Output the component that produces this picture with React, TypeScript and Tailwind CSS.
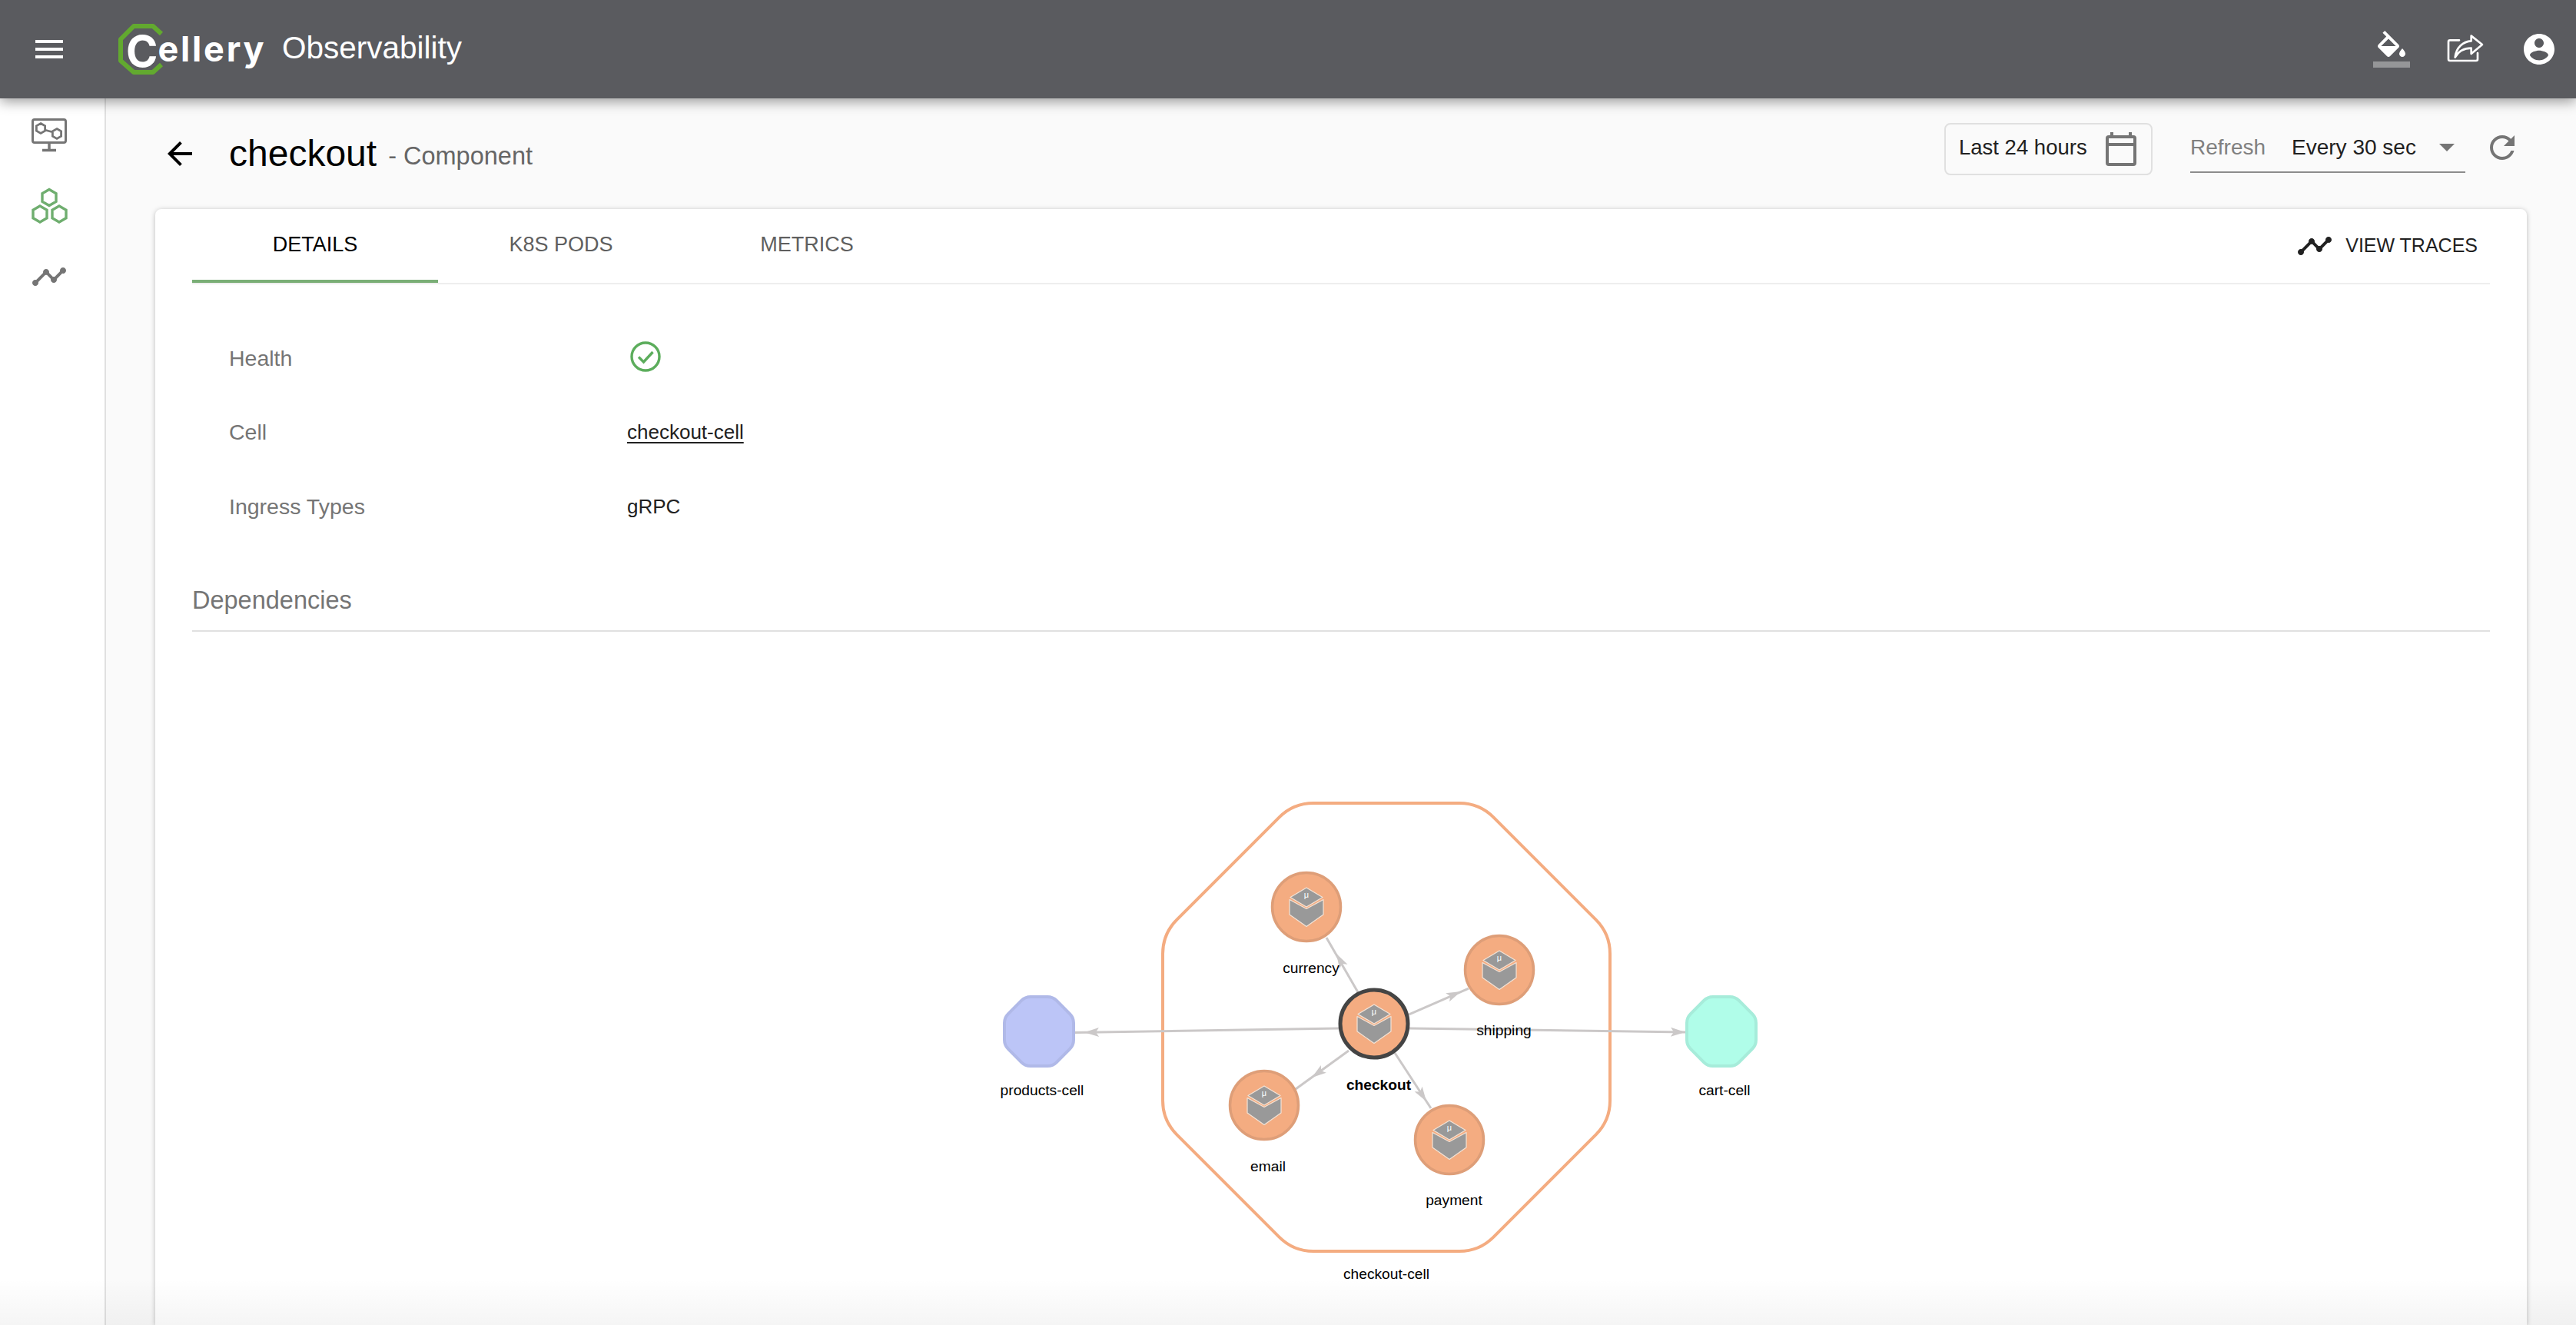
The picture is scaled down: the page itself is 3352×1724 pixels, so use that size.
import React from "react";

type Pt = [number, number];

const roundedPoly = (pts: Pt[], r: number) => {
  let d = "";
  pts.forEach((p, i) => {
    const prev = pts[(i + pts.length - 1) % pts.length];
    const next = pts[(i + 1) % pts.length];
    const toward = (a: Pt, b: Pt): Pt => {
      const len = Math.hypot(b[0] - a[0], b[1] - a[1]);
      return [a[0] + ((b[0] - a[0]) / len) * r, a[1] + ((b[1] - a[1]) / len) * r];
    };
    const a = toward(p, prev);
    const b = toward(p, next);
    d += `${i === 0 ? "M" : "L"}${a[0]} ${a[1]}Q${p[0]} ${p[1]} ${b[0]} ${b[1]}`;
  });
  return d + "Z";
};

const octagon = (cx: number, cy: number, half: number, cut: number): Pt[] => [
  [cx - half + cut, cy - half],
  [cx + half - cut, cy - half],
  [cx + half, cy - half + cut],
  [cx + half, cy + half - cut],
  [cx + half - cut, cy + half],
  [cx - half + cut, cy + half],
  [cx - half, cy + half - cut],
  [cx - half, cy - half + cut],
];

const edges: { from: Pt; to: Pt; tip: Pt }[] = [
  { from: [1742, 1340], to: [1399, 1345.5], tip: [1411, 1345.3] },
  { from: [1834, 1340], to: [2193, 1345], tip: [2193, 1345] },
  { from: [1767, 1293], to: [1726, 1222], tip: [1739, 1243] },
  { from: [1833, 1322], to: [1911, 1288], tip: [1901, 1292] },
  { from: [1755, 1369], to: [1686, 1419], tip: [1707, 1404] },
  { from: [1815, 1372], to: [1862, 1444], tip: [1856, 1435] },
];

const nodes = [
  { x: 1700, y: 1182, label: "currency", lx: 1706, ly: 1262 },
  { x: 1951, y: 1264, label: "shipping", lx: 1957, ly: 1343 },
  { x: 1645, y: 1440, label: "email", lx: 1650, ly: 1520 },
  { x: 1886, y: 1485, label: "payment", lx: 1892, ly: 1564 },
];

const arrowHead = (from: Pt, tip: Pt) => {
  const a = Math.atan2(tip[1] - from[1], tip[0] - from[0]);
  const pt = (along: number, side: number) =>
    `${tip[0] - Math.cos(a) * along - Math.sin(a) * side},${tip[1] - Math.sin(a) * along + Math.cos(a) * side}`;
  return [pt(0, 0), pt(19, 6), pt(15, 0), pt(19, -6)].join(" ");
};

const Cube = ({ x, y }: { x: number; y: number }) => (
  <g transform={`translate(${x} ${y})`} fill="#999999" stroke="#f3e3d6" strokeWidth="1.2" strokeLinejoin="round">
    <path d="M0 -25L21 -12.5L0 0L-21 -12.5Z" />
    <path d="M-22 -9.5L0 2.5L22 -9.5V10L0 25.5L-22 10Z" />
    <text x="0" y="-12" textAnchor="middle" fontSize="11" fill="#ffffff" stroke="none" fontFamily="Liberation Sans, sans-serif">
      μ
    </text>
  </g>
);

const ServiceNode = ({ x, y, active }: { x: number; y: number; active?: boolean }) => (
  <g>
    <circle
      cx={x}
      cy={y}
      r={active ? 44 : 44.5}
      fill="#f4ac81"
      stroke={active ? "#444444" : "#de9e78"}
      strokeWidth={active ? 5 : 3.5}
    />
    <Cube x={x} y={y} />
  </g>
);

const DependencyGraph = () => (
  <svg viewBox="250 824 2990 900" className="block w-[2990px] h-[900px]" fontFamily="Liberation Sans, Arial, sans-serif">
    <path
      d={roundedPoly(
        [
          [1683, 1047],
          [1925, 1047],
          [2095, 1217],
          [2095, 1460],
          [1925, 1630],
          [1683, 1630],
          [1513, 1460],
          [1513, 1217],
        ],
        26,
      )}
      fill="none"
      stroke="#f4ac81"
      strokeWidth="4"
    />
    {edges.map((e, i) => (
      <g key={i}>
        <line x1={e.from[0]} y1={e.from[1]} x2={e.to[0]} y2={e.to[1]} stroke="#cbc8c8" strokeWidth="3" />
        <polygon points={arrowHead(e.from, e.tip)} fill="#cbc8c8" />
      </g>
    ))}
    <path d={roundedPoly(octagon(1352, 1344, 45, 27), 7)} fill="#bcc5f7" stroke="#b0b9e8" strokeWidth="4" />
    <path d={roundedPoly(octagon(2240, 1344, 45, 27), 7)} fill="#b0fde9" stroke="#a6ecda" strokeWidth="4" />
    {nodes.map((n) => (
      <ServiceNode key={n.label} x={n.x} y={n.y} />
    ))}
    <ServiceNode x={1788} y={1334} active />
    <g fontSize="19.2" fill="#000000" textAnchor="middle">
      {nodes.map((n) => (
        <text key={n.label} x={n.lx} y={n.ly + 6}>
          {n.label}
        </text>
      ))}
      <text x={1794} y={1420} fontWeight="700">
        checkout
      </text>
      <text x={1356} y={1427}>
        products-cell
      </text>
      <text x={2244} y={1427}>
        cart-cell
      </text>
      <text x={1804} y={1666}>
        checkout-cell
      </text>
    </g>
  </svg>
);

const TimelineIcon = ({ className }: { className: string }) => (
  <svg viewBox="0 0 24 24" className={className} fill="currentColor">
    <path d="M23 8c0 1.1-.9 2-2 2-.18 0-.35-.02-.51-.07l-3.56 3.55c.05.16.07.34.07.52 0 1.1-.9 2-2 2s-2-.9-2-2c0-.18.02-.36.07-.52l-2.55-2.55c-.16.05-.34.07-.52.07s-.36-.02-.52-.07l-4.55 4.56c.05.16.07.33.07.51 0 1.1-.9 2-2 2s-2-.9-2-2 .9-2 2-2c.18 0 .35.02.51.07l4.56-4.55C8.02 9.36 8 9.18 8 9c0-1.1.9-2 2-2s2 .9 2 2c0 .18-.02.36-.07.52l2.55 2.55c.16-.05.34-.07.52-.07s.36.02.52.07l3.55-3.56C19.02 8.35 19 8.18 19 8c0-1.1.9-2 2-2s2 .9 2 2z" />
  </svg>
);

const Logo = () => (
  <div className="relative w-[200px] h-[72px] flex items-baseline pl-[11px] text-white font-['Inter',sans-serif] font-bold leading-none">
    <span className="relative top-[7px] text-[56px] leading-[64px] tracking-[-1px]">C</span>
    <span className="ml-[1px] text-[45px] leading-[64px] tracking-[2.8px]">ellery</span>
    <svg viewBox="153 30 60 72" className="absolute left-0 top-0 w-[60px] h-[72px]" fill="none">
      <path d="M210 46L199 36H174L157 53V81L174 96H199L210 86" stroke="#62a92f" strokeWidth="6" strokeLinejoin="round" />
    </svg>
  </div>
);

const Header = () => (
  <header className="relative z-10 h-[128px] shrink-0 flex items-center pl-10 pr-6 bg-[#5a5b5f] text-white shadow-[0_4px_16px_rgba(0,0,0,0.4)]">
    <svg viewBox="0 0 24 24" className="w-12 h-12" fill="currentColor">
      <path d="M3 18h18v-2H3v2zm0-5h18v-2H3v2zm0-7v2h18V6H3z" />
    </svg>
    <div className="ml-[65px]">
      <Logo />
    </div>
    <span className="ml-[14px] -mt-[3px] text-[40.500px] leading-none">Observability</span>
    <div className="ml-auto flex items-center gap-12">
      <svg viewBox="0 0 24 24" className="w-12 h-12" fill="currentColor">
        <path d="M16.56 8.94L7.62 0 6.21 1.41l2.38 2.38-5.15 5.15c-.59.59-.59 1.54 0 2.12l5.5 5.5c.29.29.68.44 1.06.44s.77-.15 1.06-.44l5.5-5.5c.59-.58.59-1.53 0-2.12zM5.21 10L10 5.21 14.79 10H5.21zM19 11.5s-2 2.17-2 3.5c0 1.1.9 2 2 2s2-.9 2-2c0-1.33-2-3.5-2-3.5z" />
        <path fillOpacity=".36" d="M0 20h24v4H0z" />
      </svg>
      <svg viewBox="0 -12 144 144" className="w-12 h-12" fill="none" stroke="currentColor" strokeWidth="8" strokeLinejoin="round" strokeLinecap="round">
        <path d="M48 25H12Q6 25 6 31V99Q6 105 12 105H114Q120 105 120 99V75" />
        <path d="M32 92C36 52 64 30 95 28V8L138 42L95 78V56C70 56 46 66 32 92Z" />
      </svg>
      <svg viewBox="0 0 24 24" className="w-12 h-12" fill="currentColor">
        <path d="M12 2C6.48 2 2 6.48 2 12s4.48 10 10 10 10-4.48 10-10S17.52 2 12 2zm0 3c1.66 0 3 1.34 3 3s-1.34 3-3 3-3-1.34-3-3 1.34-3 3-3zm0 14.2c-2.5 0-4.71-1.28-6-3.22.03-1.99 4-3.08 6-3.08 1.99 0 5.97 1.09 6 3.08-1.29 1.94-3.5 3.22-6 3.22z" />
      </svg>
    </div>
  </header>
);

const Sidebar = () => (
  <aside className="w-[138px] shrink-0 bg-white border-r-2 border-[#e0e0e0] flex flex-col items-center pr-[8px]">
    <svg viewBox="0 0 48 48" className="mt-[23px] w-12 h-12 text-[#757575]" fill="none" stroke="currentColor">
      <rect x="2.500" y="4.500" width="43" height="30" rx="2.500" strokeWidth="3" />
      <path d="M24 36v7M15 44.500h18" strokeWidth="3.500" />
      <path d="M13 9.500l5.600 3.200v6.500l-5.600 3.200-5.600-3.200v-6.500zM34 16.500l5.600 3.200v6.500l-5.600 3.200-5.600-3.200v-6.500zM18 18l11 3" strokeWidth="2.800" />
    </svg>
    <svg viewBox="0 0 48 48" className="mt-[45px] w-12 h-12 text-[#6fae6f]" fill="none" stroke="currentColor" strokeWidth="3.400">
      <path d="M24 2.500l9 5.200v10.600l-9 5.200-9-5.200V7.700zM12 24l9 5.200v10.600l-9 5.200-9-5.200V29.200zM37 24l9 5.200v10.600l-9 5.200-9-5.200V29.200z" />
    </svg>
    <TimelineIcon className="mt-[44px] w-12 h-12 text-[#757575]" />
  </aside>
);

const Toolbar = () => (
  <div className="h-[144px] shrink-0 flex items-center pl-[72px] pr-[72px]">
    <svg viewBox="0 0 24 24" className="w-12 h-12 text-black" fill="currentColor">
      <path d="M20 11H7.83l5.59-5.59L12 4l-8 8 8 8 1.41-1.41L7.83 13H20v-2z" />
    </svg>
    <h1 className="ml-[40px] text-[48px] leading-none text-black">checkout</h1>
    <span className="ml-[15px] mt-[6px] text-[32.500px] leading-none text-[#666666]">- Component</span>
    <div className="ml-auto flex items-center">
      <div className="w-[271px] h-[68px] flex items-center justify-between pl-[17px] pr-[19px] pb-[4px] border-2 border-[#e0e0e0] rounded-[8px] -mt-[12px]">
        <span className="text-[27.500px] text-[#212121]">Last 24 hours</span>
        <svg viewBox="0 0 40 44" className="w-10 h-11 mt-[4px] text-[#757575]" fill="none" stroke="currentColor" strokeWidth="4">
          <rect x="2" y="6" width="36" height="36" rx="2" />
          <path d="M2 16h36M8 0v6M32 0v6" />
        </svg>
      </div>
      <div className="ml-[49px] w-[358px] h-[62px] flex items-center pb-[3px] border-b-2 border-[#8c8c8c] -mt-[12px]">
        <span className="text-[28px] text-[#808080]">Refresh</span>
        <span className="ml-[34px] text-[28px] text-[#212121]">Every 30 sec</span>
        <span className="ml-[30px] w-0 h-0 border-x-[10px] border-x-transparent border-t-[10px] border-t-[#757575]" />
      </div>
      <svg viewBox="0 0 24 24" className="ml-[24px] w-12 h-12 text-[#757575] -mt-[16px]" fill="currentColor">
        <path d="M17.65 6.35C16.2 4.9 14.21 4 12 4c-4.42 0-7.99 3.58-7.99 8s3.57 8 7.99 8c3.73 0 6.84-2.55 7.73-6h-2.08c-.82 2.33-3.04 4-5.65 4-3.31 0-6-2.69-6-6s2.69-6 6-6c1.66 0 3.14.69 4.22 1.78L13 11h7V4l-2.35 2.35z" />
      </svg>
    </div>
  </div>
);

const tabs = ["DETAILS", "K8S PODS", "METRICS"];

const Tabs = () => (
  <div className="flex h-[98px] border-b-2 border-[#eeeeee]">
    {tabs.map((t, i) => (
      <div
        key={t}
        className={
          i === 0
            ? "w-[320px] h-[96px] flex items-center justify-center text-[27px] text-black border-b-4 border-[#7aae76]"
            : "w-[320px] h-[96px] flex items-center justify-center text-[27px] text-[#5f5f5f] pb-1"
        }
      >
        {t}
      </div>
    ))}
    <div className="ml-auto h-[96px] flex items-center pr-4 text-[25px] text-[#212121]">
      <TimelineIcon className="w-12 h-12 mr-[16px]" />
      VIEW TRACES
    </div>
  </div>
);

const Row = ({ label, children }: { label: string; children: React.ReactNode }) => (
  <div className="h-[96.500px] flex items-center pl-[48px] text-[28.500px]">
    <span className="w-[518px] text-[#757575]">{label}</span>
    {children}
  </div>
);

const Details = () => (
  <div className="pt-[48px]">
    <Row label="Health">
      <svg viewBox="0 0 40 40" className="ml-[4px] -mt-[4px] w-10 h-10" fill="none" stroke="#5cad5c" strokeWidth="3.400">
        <circle cx="20" cy="20" r="18" />
        <path d="M11 20.500l6.500 6.500L29.500 14" />
      </svg>
    </Row>
    <Row label="Cell">
      <span className="text-[26px] text-[#212121] underline underline-offset-[4px]">checkout-cell</span>
    </Row>
    <Row label="Ingress Types">
      <span className="text-[26px] text-[#212121]">gRPC</span>
    </Row>
  </div>
);

export default function App() {
  return (
    <div className="relative h-screen overflow-hidden flex flex-col bg-[#fafafa] font-['Liberation_Sans',Arial,sans-serif]">
      <Header />
      <div className="flex flex-1 min-h-0">
        <Sidebar />
        <main className="flex-1 min-w-0 flex flex-col">
          <Toolbar />
          <section className="ml-[64px] mr-[64px] flex-1 px-[48px] bg-white rounded-t-[8px] shadow-[0_1px_6px_rgba(0,0,0,0.25)]">
            <Tabs />
            <Details />
            <h2 className="mt-[50.500px] h-[64px] border-b-2 border-[#e0e0e0] text-[32.500px] leading-[46px] text-[#757575]">Dependencies</h2>
            <DependencyGraph />
          </section>
        </main>
      </div>
      <div className="absolute bottom-0 inset-x-0 h-[60px] bg-gradient-to-b from-transparent to-black/[0.04] pointer-events-none" />
    </div>
  );
}
